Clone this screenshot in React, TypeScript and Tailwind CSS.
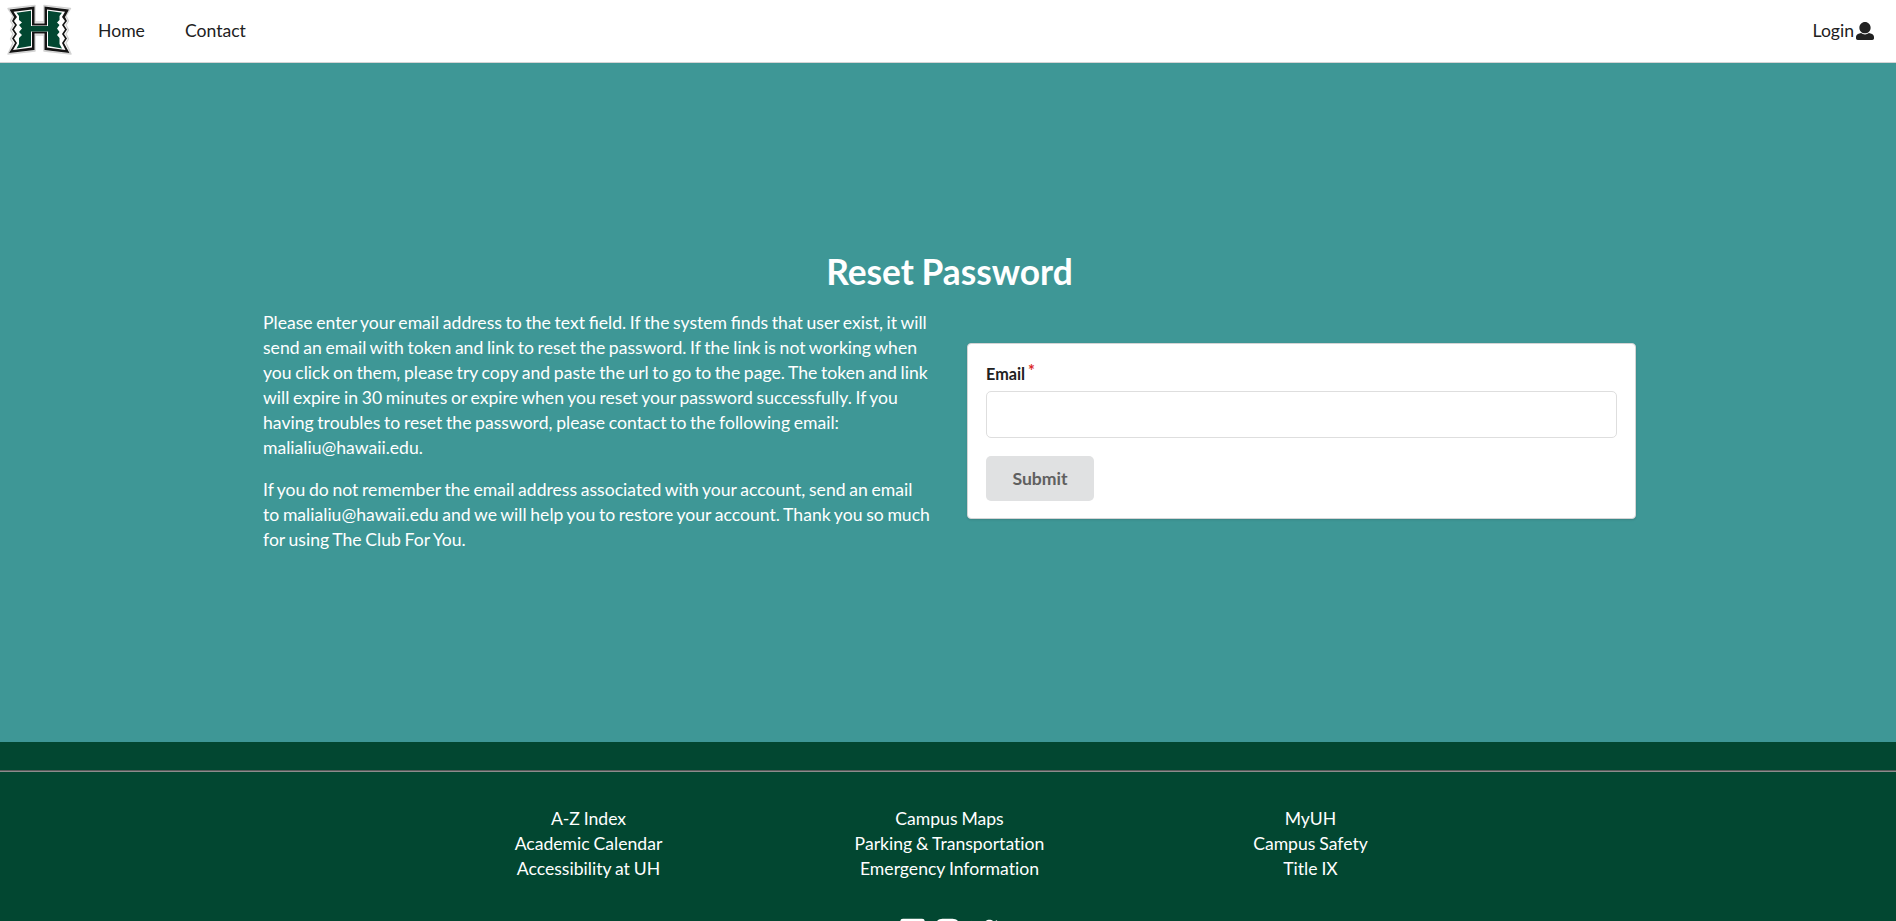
import { FaFacebookSquare, FaInstagram, FaTwitter } from "react-icons/fa";

const footerColumns = [
  ["A-Z Index", "Academic Calendar", "Accessibility at UH"],
  ["Campus Maps", "Parking & Transportation", "Emergency Information"],
  ["MyUH", "Campus Safety", "Title IX"],
];

function Logo() {
  return (
    <svg className="h-[62px] w-[78px]" viewBox="0 0 78 62">
      <path d="M8 8.5 L35 5.5 V22 H44 V5.5 L70.5 8.5 L66 16 L68.5 21 L66 25 L68.5 30 L66 34 L68.5 39 L66 43 L71 54 L44 51 V35 H35 V51 L8 54 L13 43 L10.5 39 L13 34 L10.5 30 L13 25 L10.5 21 L13 16Z" fill="#fff" stroke="#d2d2d2" strokeWidth="1.4" strokeLinejoin="round" />
      <path d="M9.5 9.5 L34.5 6.5 V23.5 H44.5 V6.5 L69 9.5 L65 17 L67 21 L64 25 L67 29.5 L64 34 L67 38.5 L64 43 L69.5 53 L44.5 50 V33.5 H34.5 V50 L9 53 L15 43 L12 38.5 L15 34 L12 29.5 L15 25 L12 21 L14 17Z" fill="#141414" />
      <path d="M13.5 11.8 L32 9.5 V25.5 H47 V9.5 L65 11.8 L62 17 L65 21 L62 25 L65 29.5 L62 34 L65 38.5 L62 43 L65.5 50 L47 47.5 V31.5 H32 V47.5 L13 50 L17 43 L14 38.5 L17 34 L14 29.5 L17 25 L14 21 L17 17Z" fill="#fff" />
      <path d="M16.5 12.7 L31 10.8 V26 H48 V10.8 L62 12.7 L59.5 16 V20 L57 22.5 L59.5 25 L57 28.5 L59.5 32 L57 35 L59.5 38 V44 L62 48.5 L48 46 V31.5 H31 V46 L16.5 48.5 L19 44 V38 L22 35 L19 32 L22 28.5 L19 25 L22 22.5 L19 20 V16Z" fill="#024731" />
    </svg>
  );
}

function UserIcon() {
  return (
    <svg className="ml-[2px] size-[18px]" viewBox="0 0 512 512" fill="currentColor">
      <path d="M256 0c88.366 0 160 71.634 160 160s-71.634 160-160 160S96 248.366 96 160 167.634 0 256 0zm183.283 333.821l-71.313-17.828c-74.923 53.89-165.738 41.864-223.94 0l-71.313 17.828C29.981 344.505 0 382.903 0 426.955V464c0 26.51 21.49 48 48 48h416c26.51 0 48-21.49 48-48v-37.045c0-44.052-29.981-82.45-72.717-93.134z" />
    </svg>
  );
}

export default function App() {
  return (
    <div className="flex h-[921px] w-full flex-col overflow-hidden bg-[#3e9796] font-[Lato,sans-serif] text-[17.6px] leading-[25px] text-white">
      <nav className="flex h-[63px] shrink-0 items-center border-b border-[#d4d4d5] bg-white pr-[22px] text-[#212121]">
        <Logo />
        <a className="ml-[20px] pb-[1px]">Home</a>
        <a className="ml-[40px] pb-[1px]">Contact</a>
        <a className="ml-auto flex items-center pb-[1px]">
          Login
          <UserIcon />
        </a>
      </nav>

      <main className="flex h-[679px] shrink-0 flex-col items-center pt-[186px] pl-[3px]">
        <h1 className="text-[35.3px] leading-[45px] font-bold [word-spacing:-1px]">Reset Password</h1>
        <div className="mt-[16px] flex w-[1373px] items-center gap-[35px]">
          <div className="flex w-[669px] flex-col gap-[17px] [word-spacing:-0.85px]">
            <p>
              Please enter your email address to the text field. If the system finds that user exist, it will
              send an email with token and link to reset the password. If the link is not working when
              you click on them, please try copy and paste the url to go to the page. The token and link
              will expire in 30 minutes or expire when you reset your password successfully. If you
              having troubles to reset the password, please contact to the following email:
              malialiu@hawaii.edu.
            </p>
            <p>
              If you do not remember the email address associated with your account, send an email
              to&nbsp;malialiu@hawaii.edu and we will help you to restore your account. Thank you so much
              for using The Club For You.
            </p>
          </div>
          <form className="h-[176px] flex-1 rounded-[4px] border border-[#d4d4d5] bg-white px-[18px] pt-[19px] text-[#212121] shadow-[0_1px_2px_0_rgba(34,36,38,0.15)]">
            <label className="block text-[16.2px] leading-[22px] font-bold">
              Email<span className="ml-[3px] inline-block -translate-y-[3px] text-[#db2828]">*</span>
            </label>
            <input className="mt-[6px] block h-[47px] w-full rounded-[5px] border border-[#dedede] px-4 outline-none" />
            <button type="button" className="mt-[18px] h-[45px] w-[108px] rounded-[5px] bg-[#e0e1e2] font-bold text-[#606060]">
              Submit
            </button>
          </form>
        </div>
      </main>

      <footer className="flex h-[179px] shrink-0 flex-col items-center bg-[#024731] pt-[28px]">
        <hr className="h-[2px] w-full border-t border-b border-t-[#5a5a5a] border-b-[#8c8c8c]" />
        <div className="mt-[34px] flex w-[1086px] pl-[3px] text-center [font-variant-ligatures:none] [word-spacing:-0.6px]">
          {footerColumns.map((links) => (
            <ul key={links[0]} className="w-[361px]">
              {links.map((link) => (
                <li key={link}>{link}</li>
              ))}
            </ul>
          ))}
        </div>
        <div className="mt-[36px] flex gap-[10px] pl-[2px]">
          <FaFacebookSquare className="h-[28px] w-[25px]" />
          <FaInstagram className="h-[28px] w-[25px]" />
          <FaTwitter className="size-[28px]" />
        </div>
      </footer>
    </div>
  );
}
